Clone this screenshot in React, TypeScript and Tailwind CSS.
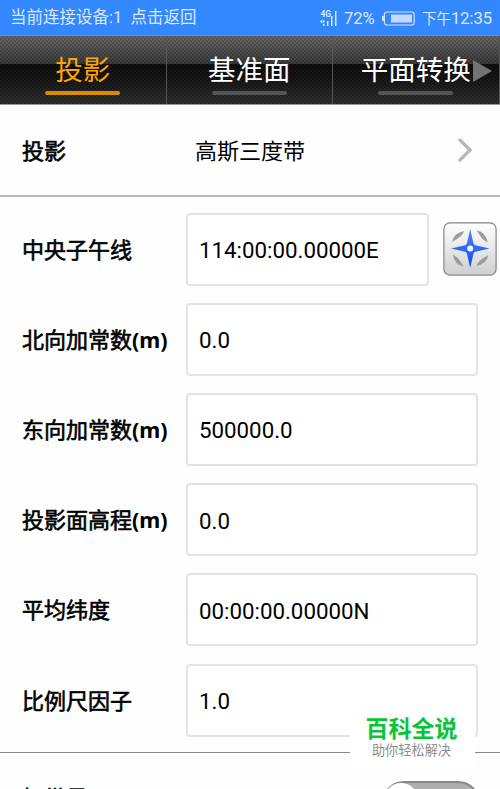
import React from 'react';

type Field = {
  label: string;
  unit?: string;
  value: string;
  locate?: boolean;
};

const tabs = ['投影', '基准面', '平面转换'];

const fields: Field[] = [
  { label: '中央子午线', value: '114:00:00.00000E', locate: true },
  { label: '北向加常数', unit: '(m)', value: '0.0' },
  { label: '东向加常数', unit: '(m)', value: '500000.0' },
  { label: '投影面高程', unit: '(m)', value: '0.0' },
  { label: '平均纬度', value: '00:00:00.00000N' },
  { label: '比例尺因子', value: '1.0' },
];

const SignalIcon = () => (
  <svg width="18" height="18" viewBox="0 0 18 18" className="text-[#d9e8ff]">
    <text x="0.5" y="6.7" fontSize="8.4" fontWeight="700" fill="currentColor" fontFamily="Roboto, sans-serif">4G</text>
    <path d="M0 11.5l2.2-2v4zM5 11.5l-2.2-2v4zM3 14h1.5v2H3zM7 11h1.5v5H7zM11 6h1.5v10H11zM15 1h1.5v15H15z" fill="currentColor" />
  </svg>
);

const BatteryIcon = () => (
  <svg width="33" height="16" viewBox="0 0 33 16">
    <rect x="2.4" y="1" width="29.8" height="13" rx="2.5" fill="none" stroke="#d3e4ff" strokeWidth="1.2" />
    <path d="M0 5h2v5H0z" fill="#d3e4ff" />
    <path d="M9 3.5h21v8H9z" fill="#c3dbff" />
  </svg>
);

const CompassIcon = () => (
  <svg width="54" height="54" viewBox="0 0 54 54" className="block">
    <defs>
      <linearGradient id="key" x1="0" y1="0" x2="0" y2="1">
        <stop offset="0" stopColor="#ffffff" />
        <stop offset="1" stopColor="#cfcfcf" />
      </linearGradient>
      <linearGradient id="star" x1="0" y1="0" x2="0" y2="1">
        <stop offset="0" stopColor="#5d82fa" />
        <stop offset="1" stopColor="#0550ed" />
      </linearGradient>
    </defs>
    <rect x="0.9" y="0.9" width="52.2" height="52.2" rx="6" fill="url(#key)" stroke="#858585" strokeWidth="1.2" />
    <g fill="#9b9b9b">
      <path d="M9 20Q11 11 21 9Q20 14 9 20Z" />
      <path d="M9 20Q11 11 21 9Q20 14 9 20Z" transform="rotate(90 27.2 26.5)" />
      <path d="M9 20Q11 11 21 9Q20 14 9 20Z" transform="rotate(180 27.2 26.5)" />
      <path d="M9 20Q11 11 21 9Q20 14 9 20Z" transform="rotate(270 27.2 26.5)" />
    </g>
    <path d="M27.2 7L30.5 21.5Q31 22.7 32.2 23.2L46.5 26.5L32.2 29.8Q31 30.3 30.5 31.5L27.2 46L23.9 31.5Q23.4 30.3 22.2 29.8L8 26.5L22.2 23.2Q23.4 22.7 23.9 21.5Z" fill="url(#star)" />
    <circle cx="27.2" cy="26.5" r="3" fill="#f4f6fb" />
  </svg>
);

const StatusBar = () => (
  <header className="flex h-[35px] shrink-0 items-center bg-[#3388ff] pt-[2px] pl-[10px] text-[#d9e8ff]">
    <span className="w-[310px] whitespace-pre text-[16.5px]">当前连接设备:1  点击返回</span>
    <SignalIcon />
    <span className="ml-[6px] w-[38px] pt-px text-[16.5px]">72%</span>
    <BatteryIcon />
    <span className="ml-[7px] whitespace-nowrap pt-px text-[16.5px]"><span className="text-[14.5px]">下午</span>12:35</span>
  </header>
);

const TabBar = () => (
  <nav className="relative flex h-[70px] shrink-0 border-t border-b border-t-[#888] border-b-[#999] bg-[linear-gradient(#656565_0%,#363636_41%,#0b0b0b_42%,#111_60%,#2d2d2d_100%)]">
    <div className="absolute inset-0 bg-[repeating-conic-gradient(rgba(0,0,0,0.14)_0_25%,rgba(255,255,255,0.025)_0_50%)] bg-[length:4px_4px]" />
    {tabs.map((tab, i) => (
      <button
        key={tab}
        className={`relative flex w-[166.5px] shrink-0 flex-col items-center border-r border-r-[#555] pt-[15px] text-[27.5px] leading-10 ${i === 0 ? 'text-[#ffa500]' : 'text-white'}`}
      >
        <span className="whitespace-nowrap">{tab}</span>
        <span className={`h-1 w-[75px] rounded-sm ${i === 0 ? 'bg-[#dc8c00]' : 'bg-[#555]'}`} />
      </button>
    ))}
    <svg width="20" height="22" viewBox="0 0 20 22" className="absolute top-[24px] right-[8px]">
      <path d="M1 0L20 11L1 22Z" fill="#737373" />
    </svg>
  </nav>
);

const FieldRow = ({ label, unit, value, locate }: Field) => (
  <div className="flex h-[90.2px] items-center">
    <label className="w-[164px] shrink-0 pt-[2px] text-[22px] whitespace-nowrap">
      <span className="[-webkit-text-stroke:0.6px_black]">{label}</span>
      {unit && <span className="font-['Noto_Sans'] text-[21.5px] leading-none font-bold">{unit}</span>}
    </label>
    <input
      readOnly
      value={value}
      aria-label={label}
      className={`h-[73px] rounded-[4px] border-2 border-[#e3e3e3] bg-white px-[11px] pt-[2px] text-[22.3px] outline-none ${locate ? 'w-[243px]' : 'w-[292px]'}`}
    />
    {locate && (
      <button className="ml-[13.5px] shrink-0" aria-label="定位">
        <CompassIcon />
      </button>
    )}
  </div>
);

const Watermark = () => (
  <div className="absolute top-[714px] left-[350px] flex h-[56px] w-[125px] flex-col items-center bg-white pt-px pr-[2px]">
    <span className="text-[23px] leading-[30px] font-bold text-[#07c535]">百科全说</span>
    <span className="text-[13.2px] leading-3 text-[#8e8e8e]">助你轻松解决</span>
  </div>
);

const App: React.FC = () => {
  return (
    <div className="relative flex h-[789px] w-[500px] flex-col overflow-hidden bg-[#fefefe] font-[Roboto,'Noto_Sans_CJK_SC',sans-serif] text-black">
      <StatusBar />
      <TabBar />

      <div className="flex h-[92px] shrink-0 items-center border-b-2 border-[#bbb] pl-[22px] text-[22px]">
        <span className="w-[173px] pt-[2px] [-webkit-text-stroke:0.6px_black]">投影</span>
        <span className="w-[262px] pt-[2px]">高斯三度带</span>
        <svg width="18" height="24" viewBox="0 0 18 24" className="text-[#b9b9b9]">
          <path d="M3 2L13 12L3 22" fill="none" stroke="currentColor" strokeWidth="3.4" strokeLinecap="round" />
        </svg>
      </div>

      <section className="h-[556px] shrink-0 border-b border-[#888] pt-[7px] pl-[22px]">
        {fields.map((field) => (
          <FieldRow key={field.label} {...field} />
        ))}
      </section>

      <div className="flex shrink-0 justify-between pt-[28px] pr-[20px] pl-[22px]">
        <span className="pt-px text-[22px] [-webkit-text-stroke:0.6px_black]">加带号</span>
        <div className="h-[44px] w-[98px] rounded-full border-2 border-[#888] bg-linear-to-b from-[#aaa] to-[#ddd]">
          <div className="h-[34px] w-[34px] rounded-full bg-white" />
        </div>
      </div>

      <Watermark />
    </div>
  );
};

export default App;
